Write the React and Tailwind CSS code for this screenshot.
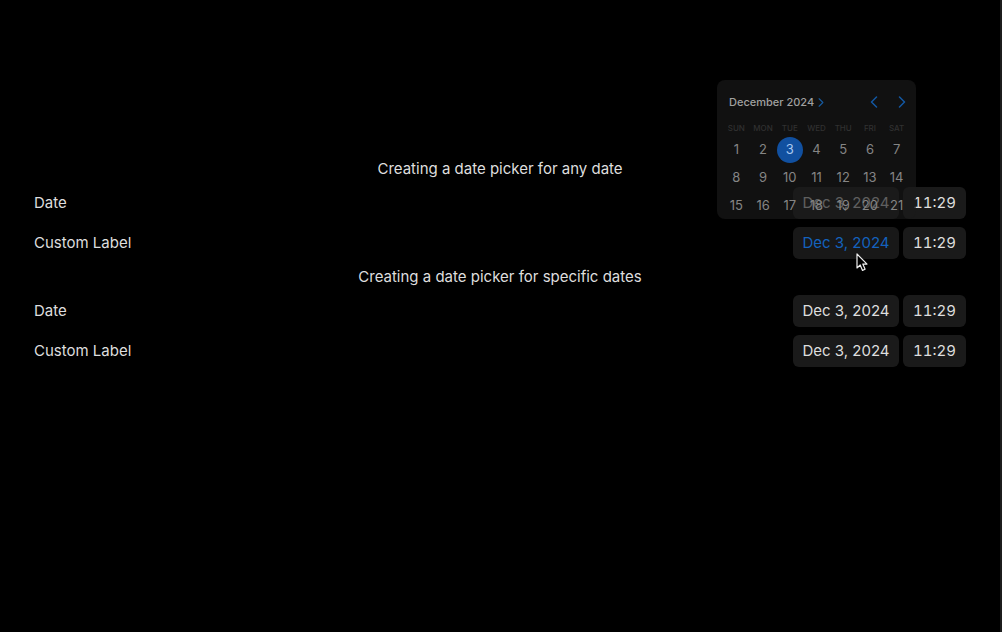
import React from "react";

const weekdays = ["SUN", "MON", "TUE", "WED", "THU", "FRI", "SAT"];
const days = Array.from({ length: 21 }, (_, i) => i + 1);

function Chevron({ left = false, className }) {
  return (
    <svg viewBox="0 0 8 12" className={className} fill="none" stroke="currentColor" strokeWidth="1.5" strokeLinecap="round" strokeLinejoin="round" aria-hidden="true">
      <path d={left ? "M6.5 1 1.5 6l5 5" : "M1.5 1l5 5-5 5"} />
    </svg>
  );
}

function Calendar() {
  return (
    <div role="dialog" aria-label="Choose date" className="absolute right-[50px] bottom-0 z-10 w-[199px] rounded-lg bg-[#1a1a1a]/65 px-1.5 pt-3 text-[#858585]">
      <div className="flex h-5 items-center pl-1.5">
        <button type="button" className="flex items-center gap-1 text-[11px] font-medium text-[#a0a0a0]">
          December 2024
          <Chevron className="h-[9px] w-[6px] text-[#165a9f]" />
        </button>
        <button type="button" aria-label="Previous month" className="ml-auto text-[#1458a3]">
          <Chevron left className="h-3 w-2" />
        </button>
        <button type="button" aria-label="Next month" className="mr-1 ml-5 text-[#1458a3]">
          <Chevron className="h-3 w-2" />
        </button>
      </div>
      <div className="mt-2.5 grid h-[15px] grid-cols-7 text-center text-[8px] leading-3 font-medium text-[#303030]">
        {weekdays.map((d) => <span key={d}>{d}</span>)}
      </div>
      <div className="grid grid-cols-7 justify-items-center gap-y-0.5">
        {days.map((d) => (
          <button
            key={d}
            type="button"
            className={d === 3 ? "size-[26px] rounded-full bg-[#1150a0] text-[13px] text-[#a9c8ef]" : "size-[26px] rounded-full text-[13px]"}
          >
            {d}
          </button>
        ))}
      </div>
    </div>
  );
}

function DateRow({ label, active = false, children }) {
  return (
    <div role="group" aria-label={label} className="relative flex h-8 items-center">
      <span className="flex-1">{label}</span>
      <div className="flex gap-1">
        <button type="button" className={active ? "relative h-8 w-[106px] rounded-md bg-[#181818] text-[#1462bd]" : "h-8 w-[106px] rounded-md bg-[#1a1a1a]"}>
          Dec 3, 2024
          {active && (
            <svg viewBox="0 0 12 19" className="absolute top-[26px] left-[63px] h-[19px] w-3" aria-hidden="true">
              <path d="M1 1v14l3.2-3 2.3 5.4 2.6-1.1-2.3-5.2H11z" fill="#000" stroke="#eee" strokeWidth="1.2" strokeLinejoin="round" />
            </svg>
          )}
        </button>
        <button type="button" className="h-8 w-[63px] rounded-md bg-[#1a1a1a] tabular-nums">11:29</button>
      </div>
      {children}
    </div>
  );
}

export default function App() {
  return (
    <main className="min-h-screen border-r-2 border-[#1c1c1c] bg-black pt-[159px] pr-[34px] pl-[34px] font-['Inter','Liberation_Sans',sans-serif] text-[15px] text-[#dedede]">
      <div className="flex flex-col gap-2">
        <h2 className="text-center leading-5">Creating a date picker for any date</h2>
        <DateRow label="Date">
          <Calendar />
        </DateRow>
        <DateRow label="Custom Label" active />
        <h2 className="text-center leading-5">Creating a date picker for specific dates</h2>
        <DateRow label="Date" />
        <DateRow label="Custom Label" />
      </div>
    </main>
  );
}
